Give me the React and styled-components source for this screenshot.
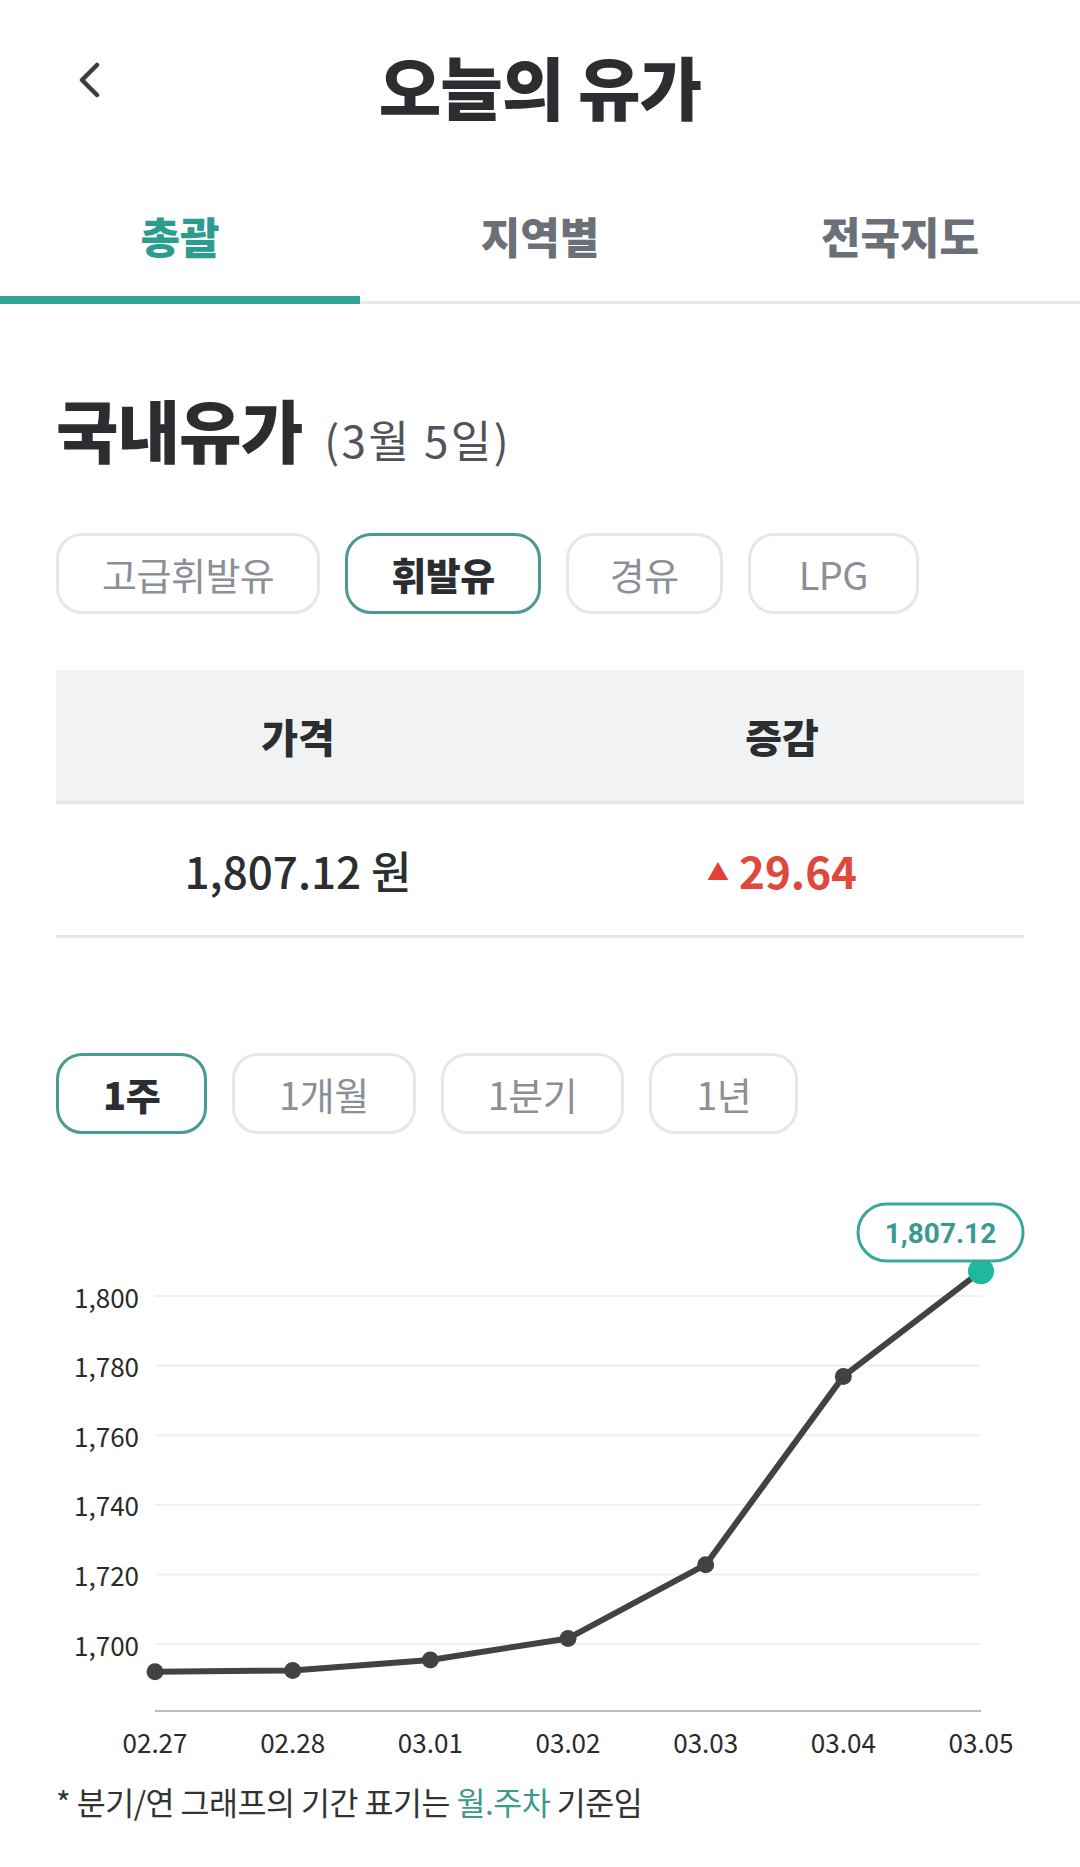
import styled, {createGlobalStyle} from "styled-components";

const GlobalStyle = createGlobalStyle`
  body {
    margin: 0;
    background: #ffffff;
    font-family: "Noto Sans CJK KR", "Noto Sans", sans-serif;
    color: #2b2d31;
  }
`;

const TEAL = "#2fa394";

const fuels = [
    {label: "고급휘발유", pad: 43},
    {label: "휘발유", pad: 43},
    {label: "경유", pad: 41},
    {label: "LPG", pad: 48},
];
const periods = ["1주", "1개월", "1분기", "1년"];
const tabs = ["총괄", "지역별", "전국지도"];

const days = ["02.27", "02.28", "03.01", "03.02", "03.03", "03.04", "03.05"];
const prices = [1692.0, 1692.4, 1695.4, 1701.6, 1722.8, 1776.9, 1807.12];
const ticks = [1800, 1780, 1760, 1740, 1720, 1700];

// chart coords are page pixels (viewBox starts at page y 1134)
const xAt = (i) => 155 + i * 137.67;
const yAt = (v) => 1296 + (1800 - v) * 3.48;

const App = () => {
    const points = prices.map((p, i) => `${xAt(i)},${yAt(p)}`).join(" ");
    const last = prices.length - 1;
    return (
        <Page>
            <GlobalStyle/>
            <Header>
                <Back aria-label="back">
                    <svg width="26" height="36" viewBox="0 0 26 36">
                        <path d="M21 3 L6 18 L21 33" fill="none" stroke="#3a3d42" strokeWidth="4.5"
                              strokeLinecap="round" strokeLinejoin="round"/>
                    </svg>
                </Back>
                <Title>오늘의 유가</Title>
                <span/>
            </Header>

            <TabBar>
                {tabs.map((t, i) => (
                    <Tab key={t} $active={i === 0}>{t}</Tab>
                ))}
            </TabBar>

            <Content>
                <Heading>
                    국내유가<DateText>(3월 5일)</DateText>
                </Heading>

                <ChipRow $mt={68}>
                    {fuels.map((f) => (
                        <Chip key={f.label} $active={f.label === "휘발유"} $pad={f.pad}>{f.label}</Chip>
                    ))}
                </ChipRow>

                <Table>
                    <HeadCell>가격</HeadCell>
                    <HeadCell>증감</HeadCell>
                    <BodyCell>1,807.12 원</BodyCell>
                    <BodyCell $up>
                        <Arrow>▲</Arrow>29.64
                    </BodyCell>
                </Table>

                <ChipRow $mt={115}>
                    {periods.map((p) => (
                        <Chip key={p} $active={p === "1주"} $pad={44}>{p}</Chip>
                    ))}
                </ChipRow>
            </Content>

            <Chart width="1080" height="636" viewBox="0 1134 1080 636">
                {ticks.map((t) => (
                    <g key={t}>
                        <line x1="155" x2="981" y1={yAt(t)} y2={yAt(t)} stroke="#f0f0f0" strokeWidth="2"/>
                        <text x="139" y={yAt(t)} textAnchor="end" dominantBaseline="central"
                              fontSize="26" fill="#2a2a2a">{t.toLocaleString("en-US")}</text>
                    </g>
                ))}
                <line x1="155" x2="981" y1="1711" y2="1711" stroke="#bdbdbd" strokeWidth="2"/>
                {days.map((d, i) => (
                    <text key={d} x={xAt(i)} y="1741" textAnchor="middle" dominantBaseline="central"
                          fontSize="26" fill="#2a2a2a">{d}</text>
                ))}
                <polyline points={points} fill="none" stroke="#424242" strokeWidth="6" strokeLinejoin="round"/>
                {prices.slice(0, last).map((p, i) => (
                    <circle key={i} cx={xAt(i)} cy={yAt(p)} r="8.5" fill="#424242"/>
                ))}
                <circle cx={xAt(last)} cy={yAt(prices[last])} r="13" fill="#1fb89c"/>
                <rect x="858" y="1204" width="165" height="57" rx="28.5" fill="#fff" stroke="#3aa898" strokeWidth="3"/>
                <text x="940.5" y="1233" textAnchor="middle" dominantBaseline="central"
                      fontSize="28" fontWeight="700" fontFamily="Roboto, sans-serif" fill="#3a9a8e">1,807.12</text>
            </Chart>

            <Note>
                * 분기/연 그래프의 기간 표기는 <Accent>월.주차</Accent> 기준임
            </Note>
        </Page>
    );
};

const Page = styled.div`
  width: 1080px;
  min-height: 1867px;
  background: #fff;
`;

const Header = styled.header`
  height: 172px;
  display: grid;
  grid-template-columns: 1fr auto 1fr;
  align-items: center;
`;

const Back = styled.button`
  justify-self: start;
  margin: 0 0 12px 76px;
  padding: 0;
  border: none;
  background: none;
  display: flex;
  cursor: pointer;
`;

const Title = styled.h1`
  margin: 0;
  font-size: 68px;
  line-height: 1;
  font-weight: 900;
  color: #2b2d31;
  letter-spacing: -1px;
`;

const TabBar = styled.nav`
  display: grid;
  grid-template-columns: repeat(3, 1fr);
  box-shadow: inset 0 -3px 0 #e8e8e8;
`;

const Tab = styled.div`
  height: 132px;
  padding-bottom: 6px;
  box-sizing: border-box;
  display: flex;
  align-items: center;
  justify-content: center;
  font-size: 43px;
  font-weight: 800;
  color: ${(p) => (p.$active ? "#2a9d8f" : "#6b7078")};
  box-shadow: ${(p) => (p.$active ? `inset 0 -8px 0 ${TEAL}` : "none")};
`;

const Content = styled.main`
  padding: 0 56px;
`;

const Heading = styled.h2`
  margin: 89px 0 0;
  height: 72px;
  display: flex;
  align-items: baseline;
  font-size: 68px;
  line-height: 72px;
  font-weight: 900;
  color: #2b2d31;
  letter-spacing: -1px;
`;

const DateText = styled.span`
  font-size: 44px;
  line-height: 1;
  font-weight: 400;
  color: #50545a;
  letter-spacing: 2.5px;
  margin-left: 22px;
`;

const ChipRow = styled.div`
  display: flex;
  gap: 25px;
  margin-top: ${(p) => p.$mt}px;
`;

const Chip = styled.div`
  height: 81px;
  box-sizing: border-box;
  padding: 0 ${(p) => p.$pad}px;
  display: flex;
  align-items: center;
  justify-content: center;
  border-radius: 26px;
  border: 3px solid ${(p) => (p.$active ? "#4a9a92" : "#e6e7e9")};
  font-size: 38px;
  font-weight: ${(p) => (p.$active ? 800 : 400)};
  color: ${(p) => (p.$active ? "#2b2d31" : "#8b9097")};
  letter-spacing: -0.5px;
`;

const Table = styled.div`
  margin-top: 56px;
  display: grid;
  grid-template-columns: 1fr 1fr;
`;

const HeadCell = styled.div`
  height: 134px;
  box-sizing: border-box;
  display: flex;
  align-items: center;
  justify-content: center;
  background: #f1f2f4;
  border-bottom: 3px solid #e6e7e9;
  font-size: 40px;
  font-weight: 800;
  color: #2b2d31;
`;

const BodyCell = styled.div`
  height: 134px;
  box-sizing: border-box;
  display: flex;
  align-items: center;
  justify-content: center;
  border-bottom: 3px solid #e6e7e9;
  font-size: 44px;
  font-weight: ${(p) => (p.$up ? 600 : 500)};
  color: ${(p) => (p.$up ? "#e0483c" : "#2b2d31")};
`;

const Arrow = styled.span`
  font-size: 22px;
  margin-right: 10px;
  color: #e4403a;
`;

const Chart = styled.svg`
  display: block;
  font-family: "Noto Sans CJK KR", "Noto Sans", sans-serif;
`;

const Note = styled.p`
  margin: 11px 0 0;
  padding: 0 56px;
  font-size: 31.5px;
  line-height: 40px;
  color: #333;
  letter-spacing: -0.5px;
`;

const Accent = styled.span`
  color: #3a9a8e;
`;

export default App;
